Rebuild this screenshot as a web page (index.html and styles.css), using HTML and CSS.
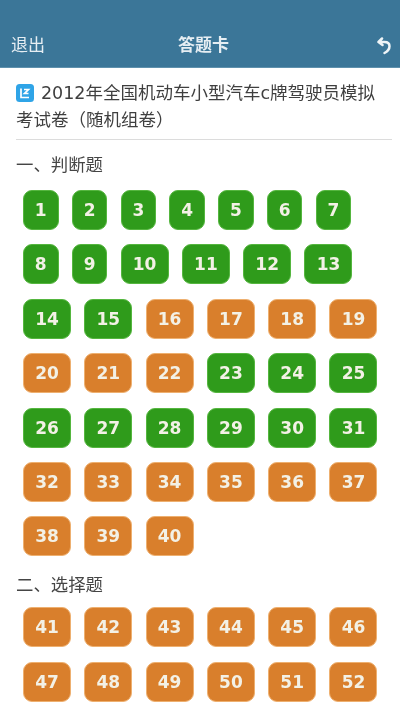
FILE: index.html
```html
<!DOCTYPE html>
<html lang="zh-CN">
<head>
<meta charset="utf-8">
<title>答题卡</title>
<link rel="stylesheet" href="styles.css">
</head>
<body>
<header class="topbar">
  <span class="exit">退出</span>
  <span class="heading">答题卡</span>
  <svg class="back" viewBox="0 0 14 18" width="14" height="18"><path d="M5 1.5 1.5 5 5.5 8M2 5H7.5C10.7 5 12.5 6.8 12.5 9.3 12.5 12 10.7 14.3 7.5 16" fill="none" stroke="#eef4f7" stroke-width="2.5" stroke-linecap="round" stroke-linejoin="round"/></svg>
</header>
<main class="content">
  <div class="paper-title">
    <svg class="paper-icon" viewBox="0 0 18 18" width="18" height="18"><rect width="18" height="18" rx="3.5" fill="#2fa4e7"/><path d="M5 4.5V13.5H13M8 5.5H12.5L8.5 9.5H12.5" fill="none" stroke="#fff" stroke-width="1.7"/></svg>
    <span class="paper-text">2012年全国机动车小型汽车c牌驾驶员模拟考试卷（随机组卷）</span>
  </div>
  <div class="divider"></div>
  <h2 class="section-title first">一、判断题</h2>
  <div class="answers">
    <a class="num ok">1</a><a class="num ok">2</a><a class="num ok">3</a><a class="num ok">4</a><a class="num ok">5</a><a class="num ok">6</a><a class="num ok">7</a>
    <a class="num ok">8</a><a class="num ok">9</a><a class="num ok">10</a><a class="num ok">11</a><a class="num ok">12</a><a class="num ok">13</a>
    <a class="num ok">14</a><a class="num ok">15</a><a class="num no">16</a><a class="num no">17</a><a class="num no">18</a><a class="num no">19</a>
    <a class="num no">20</a><a class="num no">21</a><a class="num no">22</a><a class="num ok">23</a><a class="num ok">24</a><a class="num ok">25</a>
    <a class="num ok">26</a><a class="num ok">27</a><a class="num ok">28</a><a class="num ok">29</a><a class="num ok">30</a><a class="num ok">31</a>
    <a class="num no">32</a><a class="num no">33</a><a class="num no">34</a><a class="num no">35</a><a class="num no">36</a><a class="num no">37</a>
    <a class="num no">38</a><a class="num no">39</a><a class="num no">40</a>
  </div>
  <h2 class="section-title">二、选择题</h2>
  <div class="answers">
    <a class="num no">41</a><a class="num no">42</a><a class="num no">43</a><a class="num no">44</a><a class="num no">45</a><a class="num no">46</a>
    <a class="num no">47</a><a class="num no">48</a><a class="num no">49</a><a class="num no">50</a><a class="num no">51</a><a class="num no">52</a>
  </div>
</main>
</body>
</html>
```
FILE: styles.css
```css
html, body {
  margin: 0;
  padding: 0;
  background: #fff;
}
body {
  width: 400px;
  height: 711px;
  overflow: hidden;
  font-family: "DejaVu Sans", "Noto Sans CJK SC", sans-serif;
  color: #444;
}
.topbar {
  height: 68px;
  box-sizing: border-box;
  padding: 0 9px 11px 11px;
  background: #3b7698;
  border-bottom: 1px solid #5f91ad;
  display: grid;
  grid-template-columns: 1fr auto 1fr;
  align-items: end;
  color: #e6eef3;
  font-size: 17px;
  line-height: 24px;
  font-family: "Noto Sans CJK SC", sans-serif;
}
.exit, .heading, .paper-text, .section-title, .num {
  filter: blur(0.45px);
}
.heading {
  font-weight: 700;
  margin-left: 5px;
}
.back {
  justify-self: end;
  margin-bottom: 1px;
  filter: blur(0.4px);
}
.content {
  padding: 0 8px 0 16px;
}
.paper-title {
  padding: 11px 14px 0 0;
  font-size: 17.5px;
  line-height: 25px;
  height: 50px;
  color: #3f3f3f;
  font-family: "Noto Sans CJK SC", sans-serif;
}
.paper-icon {
  vertical-align: -3px;
  margin-right: 3px;
}
.paper-text {
  font-family: "DejaVu Sans", "Noto Sans CJK SC", sans-serif;
}
.divider {
  height: 1px;
  background: #dcdcdc;
  margin: 10px 0 0;
}
.section-title {
  margin: 0;
  font-size: 17.4px;
  font-weight: 400;
  line-height: 24px;
  color: #454545;
  font-family: "Noto Sans CJK SC", sans-serif;
}
.section-title.first {
  margin-top: 12px;
  margin-bottom: 14px;
}
.answers + .section-title {
  margin-top: 16px;
  margin-bottom: 11px;
}
.answers {
  margin-left: 7px;
  width: 354.5px;
  display: flex;
  flex-wrap: wrap;
  column-gap: 13.3px;
  row-gap: 14.4px;
}
.num {
  box-sizing: border-box;
  min-width: 35.5px;
  height: 40px;
  padding: 0 6px;
  flex: 0 0 auto;
  display: flex;
  align-items: center;
  justify-content: center;
  border-radius: 9px;
  color: #f3f1e6;
  font-size: 17px;
  font-weight: 700;
}
.num:nth-child(n+10), .answers + .section-title + .answers .num {
  width: 48px;
}
.ok {
  background: #2f9b1b;
  border: 1px solid #55b63f;
}
.no {
  background: #d97f2c;
  border: 1px solid #eeb070;
}
```
